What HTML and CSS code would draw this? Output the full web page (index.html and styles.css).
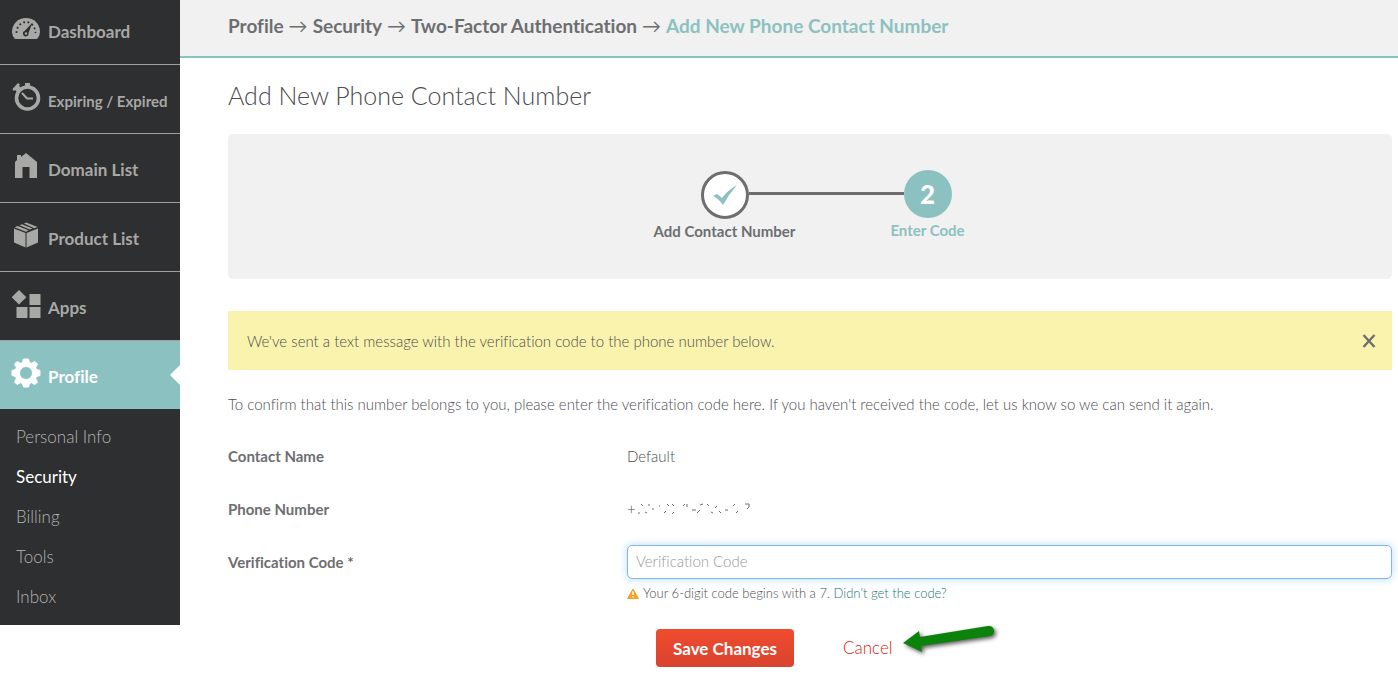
FILE: index.html
```html
<!DOCTYPE html>
<html lang="en">
<head>
    <meta charset="UTF-8">
    <title>Add New Phone Contact Number</title>
    <link rel="stylesheet" href="styles.css">
</head>
<body>
<div class="page">
    <aside class="sidebar">
        <ul class="nav">
            <li><a href="#">
                <svg class="icon" viewBox="0 0 28 28"><path fill="currentColor" d="M3 25Q0 22 0 18C0 10 6 4 14 4s14 6 14 14Q28 22 25 25z"/><path fill="#2e2f30" d="M20.500 8.500l-4 10.500a2.800 2.800 0 1 1-3.800-2z"/><circle cx="14" cy="19.500" r="1.200" fill="currentColor"/><path fill="none" stroke="#2e2f30" stroke-width="1.800" stroke-dasharray="1.800 2.600" d="M4.500 19a9.500 11 0 0 1 19 0"/></svg>
                <span>Dashboard</span></a></li>
            <li><a href="#">
                <svg class="icon" viewBox="0 0 28 28"><circle cx="15.500" cy="15" r="11" fill="none" stroke="currentColor" stroke-width="3.600"/><path fill="currentColor" d="M13 0h5v4h-5zM.500 6L6 0l2 1.500L7 3l2 2-4 4-2-2-1.500 1z"/><path fill="none" stroke="currentColor" stroke-width="2" d="M10 10l5 5.500h6"/></svg>
                <span class="small">Expiring / Expired</span></a></li>
            <li><a href="#">
                <svg class="icon" viewBox="0 0 28 28"><path fill="currentColor" d="M3 26V10l2-2V3h4v2l5-4 11 9v16h-7.500V15h-7v11z"/></svg>
                <span>Domain List</span></a></li>
            <li><a href="#">
                <svg class="icon" viewBox="0 0 28 28"><path fill="currentColor" d="M2 7.500l11.500 4.500V26.500L2 21.500zM14.500 12L26 7.500v14l-11.500 5zM2.500 6.200l3.300-1.300 10.700 4.300-2.500 1.500zM7.500 4.200l2.500-1 10.500 4.400-2.700 1zM12 2.500l2.200-1L25.500 6l-3.200 1.300z"/></svg>
                <span>Product List</span></a></li>
            <li><a href="#">
                <svg class="icon" viewBox="0 0 28 28"><path fill="currentColor" d="M7 0l7.300 7.200L7 14.400-.300 7.200zM17.500 4h11v11h-11zM4.500 17h11v11h-11zM17.500 17h11v11h-11z"/></svg>
                <span>Apps</span></a></li>
            <li class="now"><a href="#">
                <svg class="icon" viewBox="0 0 28 28"><path fill="currentColor" stroke="currentColor" stroke-linejoin="round" fill-rule="evenodd" d="M11.500 0h5l1 3.500 2 .800L23 2.500 25.500 5l-1.800 3.500.800 2 3.500 1v5l-3.500 1-.800 2 1.800 3.500-2.500 2.500-3.500-1.800-2 .800-1 3.500h-5l-1-3.500-2-.800L5 25.500 2.500 23l1.800-3.500-.800-2L0 16.500v-5l3.500-1 .800-2L2.500 5 5 2.500l3.500 1.800 2-.800zM14 7.500a6.500 6.500 0 1 0 0 13 6.500 6.500 0 0 0 0-13z"/></svg>
                <span>Profile</span></a></li>
        </ul>
        <ul class="subnav">
            <li><a href="#">Personal Info</a></li>
            <li class="now"><a href="#">Security</a></li>
            <li><a href="#">Billing</a></li>
            <li><a href="#">Tools</a></li>
            <li><a href="#">Inbox</a></li>
        </ul>
    </aside>
    <main class="main">
        <nav class="crumbs">
            <a href="#">Profile</a><i>→</i><a href="#">Security</a><i>→</i><a href="#">Two-Factor Authentication</a><i>→</i><span>Add New Phone Contact Number</span>
        </nav>
        <div class="content">
            <h1>Add New Phone Contact Number</h1>
            <div class="steps">
                <div class="step done">
                    <div class="circle"><svg width="24" height="20" viewBox="0 0 24 20"><path fill="#8cc1c1" d="M0 11l4-2 5 4Q15 5 24 0q-8 9-14 20Q6 14 0 11z"/></svg></div>
                    <p>Add Contact Number</p>
                </div>
                <div class="line"></div>
                <div class="step current">
                    <div class="circle">2</div>
                    <p>Enter Code</p>
                </div>
            </div>
            <div class="notice">
                <p>We've sent a text message with the verification code to the phone number below.</p>
                <button type="button" class="close" aria-label="Close"><svg width="14" height="14" viewBox="0 0 14 14"><path fill="none" stroke="#6d6e70" stroke-width="2.400" d="M1.500 1l11 12M12.500 1l-11 12"/></svg></button>
            </div>
            <p class="intro">To confirm that this number belongs to you, please enter the verification code here. If you haven't received the code, let us know so we can send it again.</p>
            <form>
                <div class="row">
                    <span class="label">Contact Name</span>
                    <span class="value">Default</span>
                </div>
                <div class="row">
                    <span class="label">Phone Number</span>
                    <span class="value phone">+<svg width="116" height="12" viewBox="0 0 116 12"><path fill="none" stroke="#6d6e70" d="M2 10h2M5 1l2 2M9 9l2 1M13 1v2M16 6h2M23 3h1M28 10l2-2M31 1l2 2M36 1l2 2M38 9l-2 2M47 3l2-2M51 1v3M56 7h4M61 10l3-3M64 2l3-1M71 1l2 2M75 9l2 1M81 3l-2 2M83 8l2 2M89 7h3M97 3l2-2M102 8l-2 2M109 1h4v3l-2 2"/></svg></span>
                </div>
                <div class="row">
                    <label class="label" for="code">Verification Code *</label>
                    <div class="value">
                        <input type="text" id="code" placeholder="Verification Code">
                        <p class="hint"><svg width="12" height="11" viewBox="0 0 12 11"><path fill="#f6a12a" stroke="#f6a12a" stroke-linejoin="round" d="M6 1l5.500 9.500H.500z"/><path stroke="#fff" stroke-width="1.400" d="M6 3.500V7M6 8.200v1.400"/></svg><span>Your 6-digit code begins with a 7. <a href="#">Didn't get the code?</a></span></p>
                    </div>
                </div>
                <div class="actions">
                    <button type="submit" class="save">Save Changes</button>
                    <a href="#" class="cancel">Cancel</a>
                    <svg class="arrow" width="98" height="34" viewBox="0 0 98 34"><path fill="#0b820b" d="M2 19L18 7l1 6L87 2a5 5 0 0 1 2 10L20 22l1 6z"/></svg>
                </div>
            </form>
        </div>
    </main>
</div>
</body>
</html>
```
FILE: styles.css
```css
*{
    margin: 0;
    padding: 0;
    box-sizing: border-box;
}
body{
    font-family: Lato, "Liberation Sans", sans-serif;
    font-size: 15px;
    font-weight: 300;
    font-variant-ligatures: none;
    line-height: 20px;
    color: #4c4d4f;
    background: #fff;
}
ul{
    list-style: none;
}
a{
    color: inherit;
    text-decoration: none;
}
.page{
    display: flex;
    align-items: flex-start;
}
.sidebar{
    width: 180px;
    flex: none;
    background: #2e2f30;
}
.nav a{
    display: flex;
    align-items: center;
    gap: 8px;
    height: 68px;
    padding: 4px 0 0 12px;
    font-size: 17px;
    font-weight: bold;
    color: #a8a8a6;
}
.nav li{
    position: relative;
    border-bottom: 1px solid #a0a0a0;
}
.nav li:first-child a{
    height: 64px;
    padding-top: 0;
}
.nav li.now{
    border-bottom: 0;
    background: #8cc1c1;
}
.nav li.now a{
    color: #fff;
}
.nav li.now::after{
    content: "";
    position: absolute;
    right: 0;
    top: 24px;
    border: 10px solid transparent;
    border-left: 0;
    border-right-color: #fff;
}
.nav .icon{
    width: 28px;
    height: 28px;
    margin-bottom: 8px;
    overflow: visible;
}
.nav .small{
    font-size: 15px;
}
.subnav{
    padding: 8px 16px;
    font-size: 17px;
    line-height: 40px;
    color: #b4b4b2;
}
.subnav .now{
    font-weight: normal;
    color: #fff;
}
.main{
    flex: 1;
}
.crumbs{
    display: flex;
    gap: 5px;
    height: 58px;
    padding: 16px 48px;
    font-size: 19px;
    font-weight: bold;
    color: #6d6e70;
    background: #f1f1f1;
    border-bottom: 2px solid #8cc1c1;
}
.crumbs i{
    font-style: normal;
    font-weight: normal;
}
.crumbs span{
    color: #8cc1c1;
}
.content{
    padding: 20px 6px 0 48px;
}
h1{
    font-size: 25px;
    line-height: 34px;
    font-weight: 300;
}
.steps{
    display: flex;
    justify-content: center;
    height: 145px;
    margin-top: 22px;
    padding: 36px 0 0 32px;
    background: #f1f1f1;
    border-radius: 5px;
}
.step{
    width: 48px;
    display: flex;
    flex-direction: column;
    align-items: center;
    gap: 2px;
    font-weight: bold;
    color: #6d6e70;
    white-space: nowrap;
}
.circle{
    display: flex;
    flex: none;
    align-items: center;
    justify-content: center;
    width: 48px;
    height: 48px;
    border-radius: 50%;
}
.done{
    padding-top: 1px;
}
.done .circle{
    background: #fff;
    border: 3px solid #6d6e70;
}
.step.current{
    color: #8cc1c1;
}
.current .circle{
    color: #fff;
    font-size: 26px;
    font-weight: 900;
    background: #8cc1c1;
}
.line{
    width: 155px;
    height: 3px;
    margin-top: 22px;
    background: #6d6e70;
}
.notice{
    display: flex;
    align-items: center;
    justify-content: space-between;
    height: 59px;
    margin-top: 32px;
    padding: 0 16px 0 19px;
    background: #faf3ae;
}
.close{
    display: flex;
    border: 0;
    background: none;
}
.intro{
    margin: 24px 0 32px;
}
.row{
    display: grid;
    grid-template-columns: 399px 1fr;
    margin-bottom: 33px;
}
.label{
    font-weight: bold;
    color: #6d6e70;
}
#code{
    display: block;
    width: 100%;
    height: 34px;
    margin-top: -7px;
    padding: 0 8px 2px;
    font: inherit;
    border: 1px solid #7fb8e8;
    border-radius: 5px;
    outline: 0;
    box-shadow: 0 0 8px #b5dcfa;
}
#code::placeholder{
    color: #999;
}
.hint{
    display: flex;
    align-items: center;
    gap: 4px;
    margin-top: 4px;
    font-size: 13px;
}
.hint a{
    color: #207878;
}
.actions{
    display: flex;
    align-items: center;
    margin: -12px 0 0 428px;
}
.save{
    width: 138px;
    height: 38px;
    border: 0;
    border-radius: 4px;
    font: bold 17px Lato, sans-serif;
    color: #fff;
    background: linear-gradient(#f04c2e, #d9432e);
}
.cancel{
    margin-left: 49px;
    font-size: 17px;
    color: #dc1c0e;
}
.arrow{
    margin: 0 0 14px 8px;
    filter: drop-shadow(2px 2px 2px #555);
}
```
